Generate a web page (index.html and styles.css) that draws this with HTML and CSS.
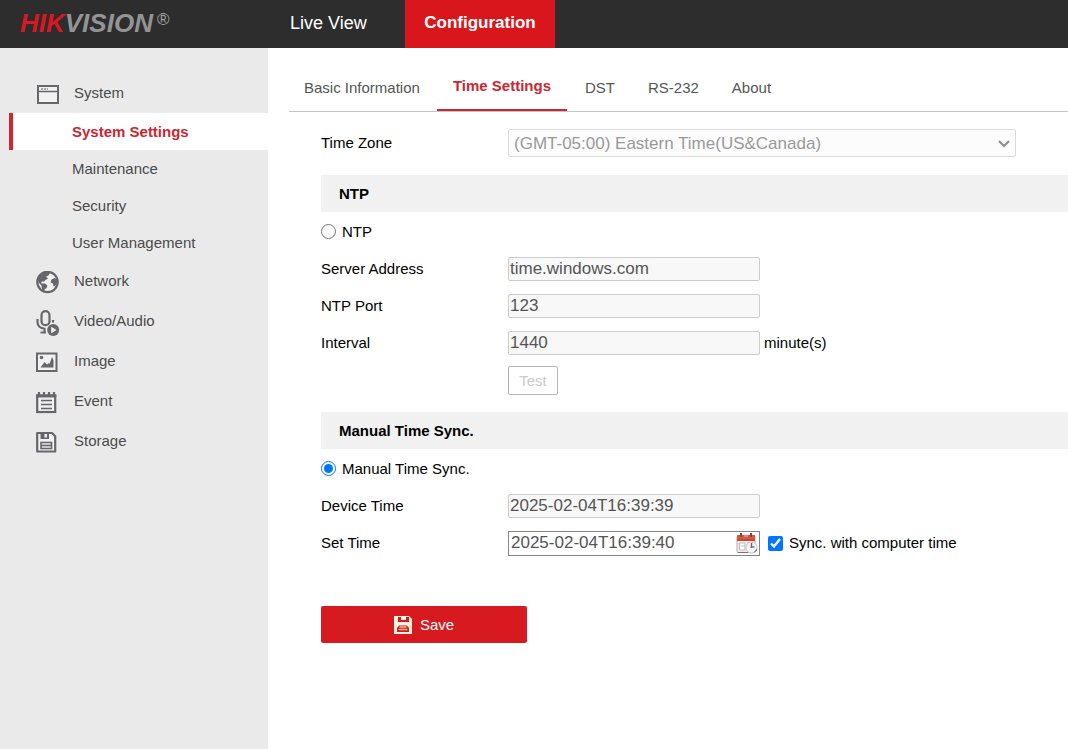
FILE: index.html
```
<!DOCTYPE html>
<html lang="en">
<head>
<meta charset="utf-8">
<title>Configuration</title>
<link rel="stylesheet" href="styles.css">
</head>
<body>
<header class="topbar">
  <div class="logo"><span class="logo-hik">HIK</span><span class="logo-vision">VISION</span><span class="logo-mark">®</span></div>
  <nav class="topnav">
    <a href="#" class="topnav-link">Live View</a>
    <a href="#" class="topnav-link topnav-active">Configuration</a>
  </nav>
</header>
<div class="layout">
  <nav class="sidebar">
    <a href="#" class="group">
      <svg class="group-icon" viewBox="0 0 24 24"><rect x="2" y="3" width="20" height="17" fill="#f1f1f1" stroke="#66666b" stroke-width="2"/><path d="M2 8.500H22" stroke="#66666b" stroke-width="1.500"/><path d="M5 6H12" stroke="#88888c" stroke-width="1.500" stroke-dasharray="2 1"/></svg>
      System</a>
    <a href="#" class="item item-active">System Settings</a>
    <a href="#" class="item">Maintenance</a>
    <a href="#" class="item">Security</a>
    <a href="#" class="item">User Management</a>
    <a href="#" class="group">
      <svg class="group-icon" viewBox="0 0 24 24"><circle cx="11.500" cy="11" r="10.200" fill="#f1f1f1" stroke="#66666b" stroke-width="2.200"/><path d="M2 9C3 4 7 1 11 1L14 2L12.500 4.500L10 5.500L12 7.500L9.500 9L8 10.500L5.500 10.500L5.500 12.500H9L11.500 14.500L10.500 17L8.500 18.500L8.500 21C6 20 5.500 17 5.500 14.500L2.500 11.500Z" fill="#66666b"/><path d="M15.500 8.500L18.500 7L21 8.500V12L19 15L17.500 15.500L17 12.500L14.500 11.500Z" fill="#66666b"/></svg>
      Network</a>
    <a href="#" class="group">
      <svg class="group-icon mic-icon" viewBox="0 0 24 26" fill="none" stroke="#66666b" stroke-width="2.200"><rect x="5.500" y="1.200" width="8" height="14" rx="4"/><path d="M1.500 9V12C1.500 15.500 4 18.500 8.500 18.500M17 10V12.500M8.500 18V22M4.500 22.500H10"/><circle cx="17.200" cy="20" r="6" fill="#66666b" stroke="none"/><path d="M15.200 16.800V23.200L20.500 20Z" fill="#f1f1f1" stroke="none"/></svg>
      Video/Audio</a>
    <a href="#" class="group">
      <svg class="group-icon" viewBox="0 1 24 24"><rect x="1" y="3.500" width="19.500" height="17.500" fill="#f1f1f1" stroke="#66666b" stroke-width="2"/><circle cx="5.500" cy="7.500" r="1.800" fill="#66666b"/><path d="M4.500 17.500L8.500 12L11 14.500L12.500 13L13.500 14L16 7L17.500 10V17.500Z" fill="#66666b"/></svg>
      Image</a>
    <a href="#" class="group">
      <svg class="group-icon" viewBox="0 1 24 24"><rect x="1.200" y="5.500" width="18" height="16.500" fill="#f1f1f1" stroke="#66666b" stroke-width="2.200"/><path d="M3 2V6M8 2V6M13 2V6M18 2V6" stroke="#66666b" stroke-width="2.200"/><path d="M0.100 6H20.300" stroke="#66666b" stroke-width="3"/><path d="M5 10.500H16M5 14.500H16M5 18.500H16" stroke="#66666b" stroke-width="1.500"/></svg>
      Event</a>
    <a href="#" class="group">
      <svg class="group-icon" viewBox="0 1 24 24"><path d="M1.200 3H16L19.200 6.200V21.500H1.200Z" fill="#f1f1f1" stroke="#66666b" stroke-width="2.200" stroke-linejoin="round"/><path d="M4.500 3H13V9H4.500Z" fill="#66666b"/><path d="M8.500 4H11V7.500H8.500Z" fill="#f1f1f1"/><rect x="5" y="12.500" width="10.500" height="6" fill="none" stroke="#66666b" stroke-width="1.600"/><path d="M5 15.500H15.500" stroke="#66666b" stroke-width="1.600"/></svg>
      Storage</a>
  </nav>
  <main class="content">
    <nav class="tabs">
      <a href="#" class="tab">Basic Information</a>
      <a href="#" class="tab tab-active">Time Settings</a>
      <a href="#" class="tab">DST</a>
      <a href="#" class="tab">RS-232</a>
      <a href="#" class="tab">About</a>
    </nav>
    <form class="form">
      <div class="row row-zone">
        <label class="label" for="zone">Time Zone</label>
        <span class="select-wrap">
          <select id="zone" class="select" disabled><option>(GMT-05:00) Eastern Time(US&amp;Canada)</option></select>
          <svg class="select-arrow" viewBox="0 0 12 8"><path d="M1 1L6 6L11 1" fill="none" stroke="#8c8c8c" stroke-width="2"/></svg>
        </span>
      </div>
      <h2 class="section">NTP</h2>
      <div class="choice"><input type="radio" name="sync" id="ntp" class="radio"><label for="ntp">NTP</label></div>
      <div class="row"><label class="label" for="server">Server Address</label><input id="server" class="field" type="text" value="time.windows.com" disabled></div>
      <div class="row"><label class="label" for="port">NTP Port</label><input id="port" class="field" type="text" value="123" disabled></div>
      <div class="row"><label class="label" for="interval">Interval</label><input id="interval" class="field" type="text" value="1440" disabled><span class="unit">minute(s)</span></div>
      <div class="row row-test"><button type="button" class="test" disabled>Test</button></div>
      <h2 class="section">Manual Time Sync.</h2>
      <div class="choice"><input type="radio" name="sync" id="manual" class="radio" checked><label for="manual">Manual Time Sync.</label></div>
      <div class="row"><label class="label" for="device">Device Time</label><input id="device" class="field" type="text" value="2025-02-04T16:39:39" disabled></div>
      <div class="row"><label class="label" for="settime">Set Time</label>
        <span class="date-field">
          <input id="settime" class="date-input" type="text" value="2025-02-04T16:39:40">
          <svg class="date-icon" viewBox="0 0 22 22"><rect x="1" y="4" width="18" height="16.500" rx="1" fill="#f0eeec" stroke="#b7aaa5"/><path d="M1 3H19V9H1Z" fill="#d9573f"/><path d="M1 8H19" stroke="#a83c2c"/><path d="M5 1V5M15 1V5" stroke="#8b3f35" stroke-width="2"/><path d="M8 4H12" stroke="#f3b5a6"/><path d="M3.500 11H9V18H3.500Z" fill="#fff" stroke="#bbb"/><path d="M5 14H9M11 11H14" stroke="#bbb"/><circle cx="15.500" cy="15.500" r="5.500" fill="#f5f5f5" stroke="#c4c4c4"/><path d="M15.500 11V16" stroke="#d33" stroke-width="1.400"/><path d="M14.500 15H18.500" stroke="#38b" stroke-width="1.500"/><path d="M2 20.500H12" stroke="#777" fill="none"/><path d="M18.500 20.200L21 17.500" stroke="#777" stroke-width="1.200"/></svg>
        </span>
        <input type="checkbox" id="pc" class="check" checked><label for="pc">Sync. with computer time</label>
      </div>
      <button type="button" class="save">
        <svg class="save-icon" viewBox="0 0 18 18"><path d="M0 0H15L18 3V18H0Z" fill="#fff2df"/><path d="M4 1H15V6H4Z" fill="#d71a20"/><path d="M7 1H12V4H7Z" fill="#fff2df"/><path d="M3 16V12L5 9.500H13L15 12V16Z" fill="#d71a20"/><path d="M5.500 11H12.500M4.500 13.500H13.500" stroke="#e7bd94" stroke-width="1.500"/></svg>
        Save</button>
    </form>
  </main>
</div>
</body>
</html>
```
FILE: styles.css
```
* { box-sizing: border-box; }
body { margin: 0; min-height: 100vh; display: flex; flex-direction: column; overflow-x: hidden; background: #fff; color: #000; font: 15px/20px "Liberation Sans", Arial, sans-serif; }
a { color: inherit; text-decoration: none; }
input, select, button { font-family: inherit; margin: 0; }

.topbar { display: flex; height: 48px; background: #2d2d2d; }
.logo { width: 268px; padding-left: 20px; line-height: 46px; font-size: 26px; font-weight: bold; font-style: italic; white-space: nowrap; display: flex; }
.logo-hik { color: #d9191f; }
.logo-vision { color: #949494; }
.logo-mark { margin-left: 4px; color: #a5a5a5; font-size: 17px; font-weight: normal; font-style: normal; line-height: 40px; }
.topnav { display: flex; font-size: 18px; line-height: 46px; color: #fff; }
.topnav-link { width: 137px; padding-left: 22px; white-space: nowrap; }
.topnav-active { width: 150px; padding: 0; text-align: center; font-size: 17px; font-weight: bold; background: #d9161c; }

.layout { flex: 1; display: flex; }
.sidebar { width: 268px; flex: none; padding-top: 25px; background: #eaeaea; color: #4b4b4b; }
.group { display: flex; align-items: center; gap: 14px; height: 40px; padding-left: 36px; }
.group-icon { width: 24px; height: 24px; margin-top: 3px; }
.mic-icon { height: 26px; }
.item { display: block; height: 37px; padding-left: 72px; line-height: 37px; }
.item-active { margin-left: 9px; padding-left: 59px; border-left: 4px solid #d02631; background: #fff; color: #cb2631; font-weight: bold; }

.content { flex: 1; min-width: 0; padding-left: 21px; }
.tabs { display: flex; gap: 1px; height: 64px; border-bottom: 1px solid #c4c4c4; color: #555; }
.tab { padding: 30px 16px 0 15px; white-space: nowrap; }
.tab + .tab { padding-left: 16px; }
.tab-active { padding-top: 28px; border-bottom: 2px solid #cb2631; color: #cb2631; font-weight: bold; }
.tab-active + .tab { padding-left: 17px; }

.form { padding: 17px 0 0 32px; }
.row { display: flex; align-items: center; height: 37px; padding-bottom: 1px; }
.label { width: 187px; flex: none; }
.row-zone { height: 28px; padding: 0; margin-bottom: 18px; }
.row-test { padding: 0 0 0 187px; margin-bottom: 13px; }
.select-wrap { position: relative; flex: 0 1 508px; margin-right: 52px; }
.select { display: block; width: 100%; height: 28px; padding: 0 5px; appearance: none; border: 1px solid #dadada; border-radius: 2px; background: #fcfcfc; color: #999; font-size: 17px; opacity: 1; }
.select-arrow { position: absolute; right: 6px; top: 11px; width: 12px; height: 8px; }
.section { height: 37px; margin: 0; padding-left: 18px; background: #f1f1f1; font-size: 15px; line-height: 37px; }
.choice { display: flex; align-items: center; gap: 6px; height: 39px; }
.radio { width: 15px; height: 15px; accent-color: #0075ff; }
.field { width: 252px; height: 24px; padding: 0 1px; border: 1px solid #ccc; border-radius: 2px; background: #f8f8f8; color: #555; font-size: 17px; }
.unit { margin-left: 4px; }
.test { width: 50px; height: 29px; padding: 0; border: 1px solid #b5b5b5; border-radius: 2px; background: #fff; color: #ccc; font-size: 15px; }
.date-field { display: flex; align-items: center; width: 252px; height: 25px; padding-right: 1px; border: 1px solid #858585; background: #fff; }
.date-input { flex: 1; min-width: 0; padding: 0 2px; border: 0; background: none; color: #555; font-size: 17px; outline: none; }
.date-icon { width: 22px; height: 22px; }
.check { width: 15px; height: 15px; margin: 0 6px 0 8px; accent-color: #0075ff; }
.save { display: flex; align-items: center; justify-content: center; gap: 8px; width: 206px; height: 37px; margin-top: 44px; border: 0; border-radius: 2px; background: #d71a20; color: #fff; font-size: 15px; }
.save-icon { width: 18px; height: 18px; }
```
